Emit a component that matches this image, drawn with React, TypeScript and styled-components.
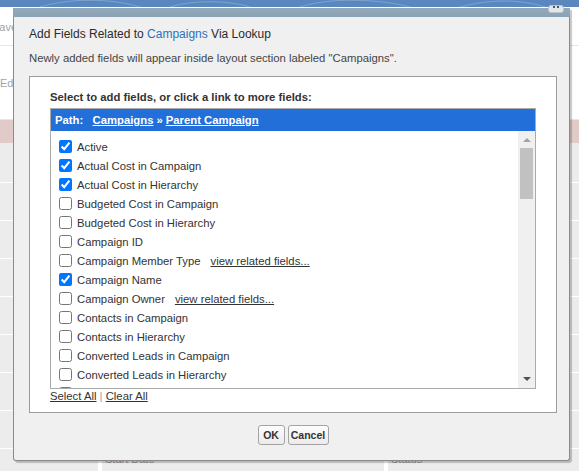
import { Fragment } from 'react';
import styled, { createGlobalStyle } from 'styled-components';

const GlobalStyle = createGlobalStyle`
  html, body {
    margin: 0;
    padding: 0;
  }
  body {
    font-family: "Liberation Sans", Arial, sans-serif;
    background: #ffffff;
    overflow: hidden;
  }
`;

const Page = styled.div`
  position: relative;
  width: 579px;
  height: 471px;
  overflow: hidden;
  background: #ffffff;
`;

const Banner = styled.div`
  height: 7px;
  background: #5b87bf;
  border-bottom: 1px solid #ffffff;
  overflow: hidden;
  svg {
    display: block;
  }
`;

const TopArea = styled.div`
  height: 112px;
  display: flex;
  flex-direction: column;
  background: #ffffff;
`;

const TopRow = styled.div<{ $h?: number }>`
  height: ${({ $h }) => ($h ? `${$h}px` : 'auto')};
  flex: ${({ $h }) => ($h ? 'none' : '1')};
  border-bottom: 1px solid #e6e6e6;
  display: flex;
  align-items: center;
  font-size: 11px;
  color: #a3a3a3;
`;

const CutText = styled.span<{ $shift: number }>`
  margin-left: ${({ $shift }) => $shift}px;
`;

const PinkBand = styled.div`
  height: 23px;
  background: #e0cbc8;
`;

const Table = styled.div`
  display: grid;
  grid-template-columns: 98px 282px 1fr;
  grid-template-rows: 39px repeat(8, 37px);
  gap: 1px 4px;
  background: #ffffff;
`;

const Cell = styled.div`
  background: #ececec;
  font-size: 11px;
  line-height: 13px;
  color: #9a9a9a;
  padding: 4px 3px 0;
`;

const Modal = styled.div`
  position: absolute;
  left: 13px;
  top: 8px;
  width: 557px;
  height: 453px;
  box-sizing: border-box;
  border: 1px solid #8a8a8a;
  border-top: none;
  border-radius: 0 0 3px 3px;
  background: #f0f0f0;
  box-shadow: 2px 2px 1px rgba(0, 0, 0, 0.22);
  display: flex;
  flex-direction: column;
`;

const ModalHeader = styled.div`
  height: 9px;
  background: linear-gradient(#93aabb, #8aa2b5);
  margin: 0 -1px;
`;

const CloseButton = styled.div`
  position: absolute;
  right: 5px;
  top: -3px;
  width: 16px;
  height: 8px;
  box-sizing: border-box;
  border: 1px solid #b9c3cc;
  border-radius: 3px;
  background: #e2e7ec;
  display: flex;
  justify-content: center;
  svg {
    display: block;
  }
`;

const ModalBody = styled.div`
  flex: 1;
  display: flex;
  flex-direction: column;
  padding: 10px 12px 0 15px;
`;

const Title = styled.h2`
  margin: 0;
  font-size: 12px;
  line-height: 14px;
  font-weight: normal;
  color: #2b2b2b;
`;

const Accent = styled.span`
  color: #2c70c0;
`;

const Note = styled.p`
  margin: 10px 0 0;
  font-size: 11.3px;
  line-height: 14px;
  color: #444444;
`;

const Panel = styled.div`
  margin-top: 11px;
  border: 1px solid #9c9c9c;
  background: #ffffff;
  padding: 13px 20px 9px 20px;
  display: flex;
  flex-direction: column;
`;

const Instruction = styled.div`
  font-size: 11.3px;
  line-height: 14px;
  font-weight: bold;
  color: #333333;
`;

const ListBox = styled.div`
  margin-top: 4px;
  height: 281px;
  box-sizing: border-box;
  border: 1px solid #ababab;
  display: flex;
  flex-direction: column;
`;

const PathBar = styled.div`
  height: 22px;
  flex: none;
  background: #226fd9;
  color: #ffffff;
  font-size: 11.3px;
  font-weight: bold;
  display: flex;
  align-items: center;
  padding-left: 4px;
`;

const PathLink = styled.a`
  color: #ffffff;
  text-decoration: underline;
  margin-left: 3px;
`;

const PathSep = styled.span`
  margin-left: 3px;
`;

const ListBody = styled.div`
  flex: 1;
  display: flex;
  overflow: hidden;
`;

const Items = styled.div`
  flex: 1;
  padding-top: 6px;
  overflow: hidden;
`;

const Item = styled.label`
  height: 19px;
  display: flex;
  align-items: center;
  font-size: 11.3px;
  color: #333333;
  white-space: nowrap;
`;

const Check = styled.input`
  width: 13px;
  height: 13px;
  margin: 0 5px 0 8px;
  flex: none;
`;

const RelatedLink = styled.a`
  margin-left: 10px;
  color: #333333;
  text-decoration: underline;
`;

const Scrollbar = styled.div`
  width: 17px;
  flex: none;
  background: #f0f0f0;
  display: flex;
  flex-direction: column;
  align-items: center;
`;

const Arrow = styled.div<{ $down?: boolean }>`
  width: 0;
  height: 0;
  border-left: 4px solid transparent;
  border-right: 4px solid transparent;
  ${({ $down }) =>
    $down
      ? 'border-top: 4px solid #505050; margin: auto 0 7px;'
      : 'border-bottom: 4px solid #a3a3a3; margin-top: 7px;'}
`;

const Thumb = styled.div`
  width: 13px;
  height: 51px;
  margin-top: 6px;
  background: #c1c1c1;
`;

const BulkLinks = styled.div`
  font-size: 11.3px;
  line-height: 14px;
  color: #9a9a9a;
  a {
    color: #333333;
    text-decoration: underline;
  }
`;

const Footer = styled.div`
  margin-top: 12px;
  display: flex;
  justify-content: center;
  gap: 3px;
`;

const Button = styled.button<{ $w: number }>`
  width: ${({ $w }) => $w}px;
  height: 20px;
  padding: 0;
  border: 1px solid #a3a3a3;
  border-radius: 3px;
  background: linear-gradient(#fdfdfd, #ebebeb);
  font-family: "Liberation Sans", Arial, sans-serif;
  font-size: 10.5px;
  font-weight: bold;
  color: #333333;
`;

type Field = { label: string; checked?: boolean; related?: boolean };

const fields: Field[] = [
  { label: 'Active', checked: true },
  { label: 'Actual Cost in Campaign', checked: true },
  { label: 'Actual Cost in Hierarchy', checked: true },
  { label: 'Budgeted Cost in Campaign' },
  { label: 'Budgeted Cost in Hierarchy' },
  { label: 'Campaign ID' },
  { label: 'Campaign Member Type', related: true },
  { label: 'Campaign Name', checked: true },
  { label: 'Campaign Owner', related: true },
  { label: 'Contacts in Campaign' },
  { label: 'Contacts in Hierarchy' },
  { label: 'Converted Leads in Campaign' },
  { label: 'Converted Leads in Hierarchy' },
  { label: 'Created By' },
];

export default function App() {
  const rows = Array.from({ length: 9 });

  return (
    <>
      <GlobalStyle />
      <Page>
        <Banner>
          <svg width="579" height="7" viewBox="0 0 579 7">
            <path d="M40 7 C70 -2 110 -2 140 7" stroke="#7fa3cf" fill="none" />
            <path d="M170 7 C190 0 230 0 250 7" stroke="#7fa3cf" fill="none" />
            <path d="M300 7 C330 -3 380 -1 410 7" stroke="#7fa3cf" fill="none" />
            <path d="M460 7 C490 -1 520 -1 545 7" stroke="#7fa3cf" fill="none" />
          </svg>
        </Banner>
        <TopArea>
          <TopRow $h={37}>
            <CutText $shift={-8}>Save</CutText>
          </TopRow>
          <TopRow>
            <CutText $shift={0}>Edit</CutText>
          </TopRow>
        </TopArea>
        <PinkBand />
        <Table>
          {rows.map((_, i) => (
            <Fragment key={i}>
              <Cell />
              <Cell>{i === 8 ? 'Start Date' : ''}</Cell>
              <Cell>{i === 8 ? 'Status' : ''}</Cell>
            </Fragment>
          ))}
        </Table>

        <Modal>
          <ModalHeader />
          <CloseButton>
            <svg width="8" height="4" viewBox="0 0 8 4">
              <rect x="1" y="0" width="2" height="2" fill="#555" />
              <rect x="5" y="0" width="2" height="2" fill="#555" />
            </svg>
          </CloseButton>
          <ModalBody>
            <Title>
              Add Fields Related to <Accent>Campaigns</Accent> Via Lookup
            </Title>
            <Note>
              Newly added fields will appear inside layout section labeled "Campaigns".
            </Note>
            <Panel>
              <Instruction>Select to add fields, or click a link to more fields:</Instruction>
              <ListBox>
                <PathBar>
                  Path:&nbsp;&nbsp;
                  <PathLink>Campaigns</PathLink>
                  <PathSep>»</PathSep>
                  <PathLink>Parent Campaign</PathLink>
                </PathBar>
                <ListBody>
                  <Items>
                    {fields.map((f) => (
                      <Item key={f.label}>
                        <Check type="checkbox" defaultChecked={f.checked} />
                        {f.label}
                        {f.related && <RelatedLink>view related fields...</RelatedLink>}
                      </Item>
                    ))}
                  </Items>
                  <Scrollbar>
                    <Arrow />
                    <Thumb />
                    <Arrow $down />
                  </Scrollbar>
                </ListBody>
              </ListBox>
              <BulkLinks>
                <a>Select All</a> | <a>Clear All</a>
              </BulkLinks>
            </Panel>
            <Footer>
              <Button $w={27}>OK</Button>
              <Button $w={41}>Cancel</Button>
            </Footer>
          </ModalBody>
        </Modal>
      </Page>
    </>
  );
}
